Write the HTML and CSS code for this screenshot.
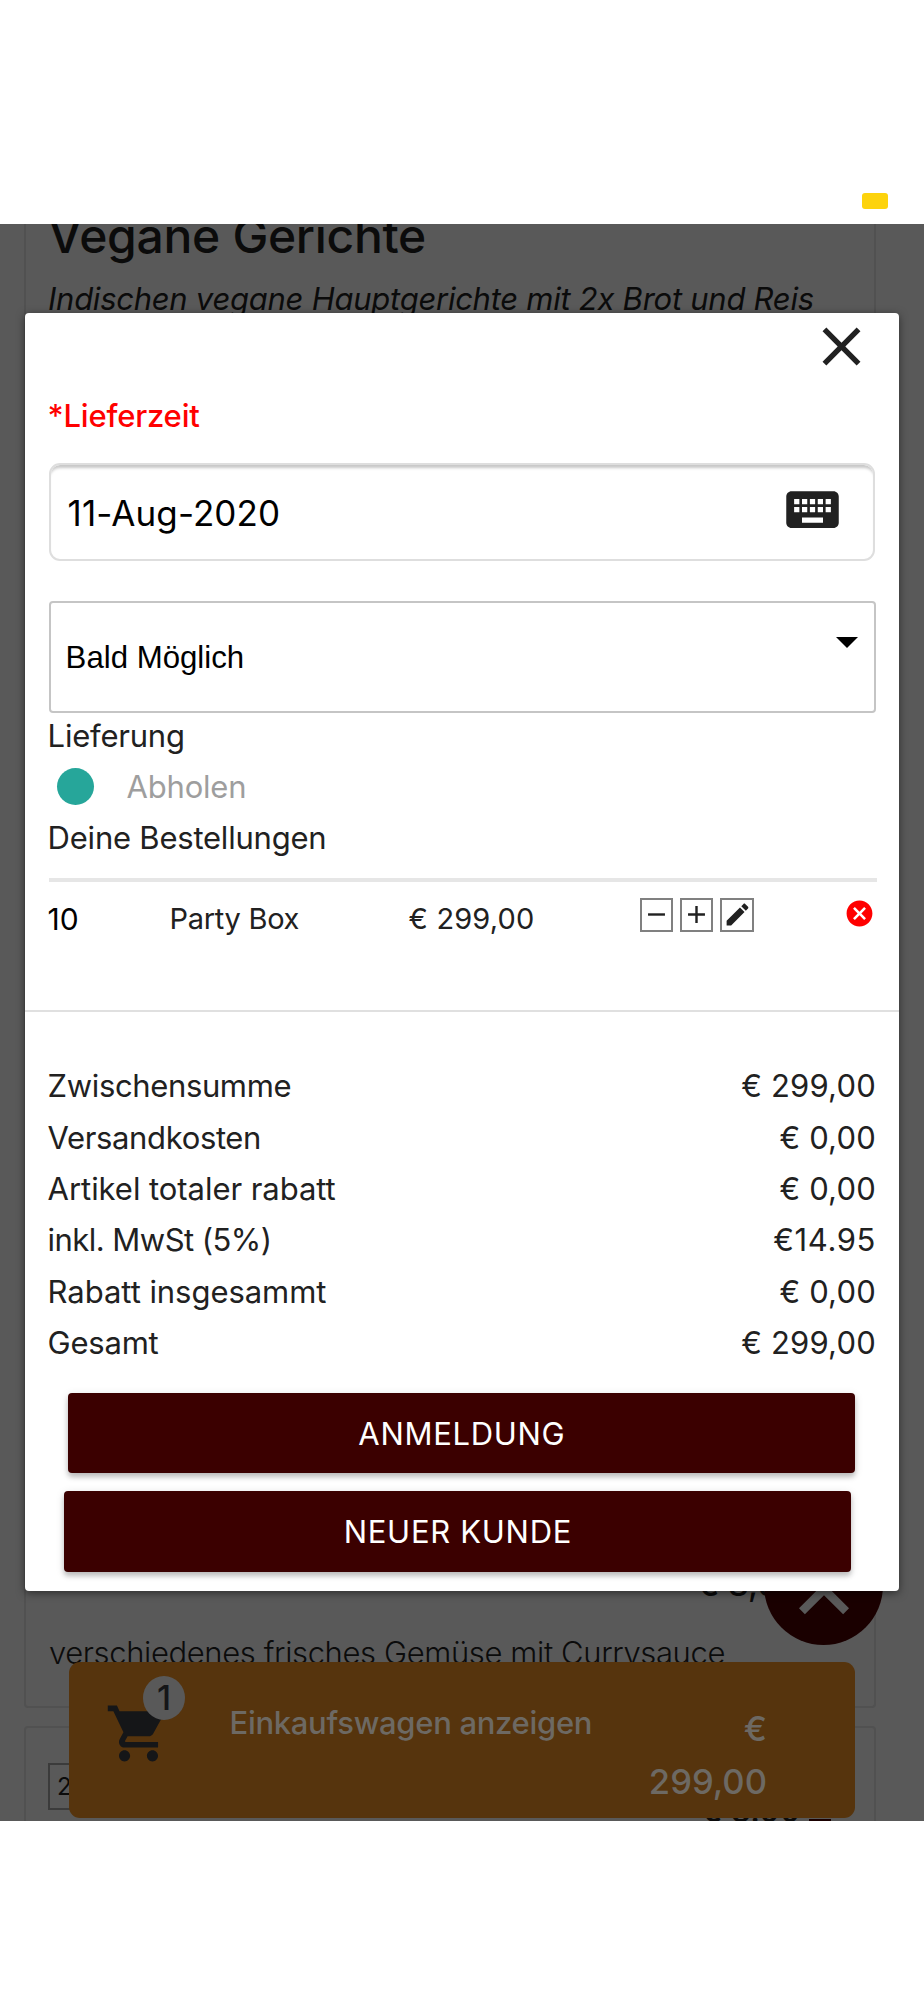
FILE: index.html
```html
<!DOCTYPE html>
<html lang="de">
<head>
<meta charset="utf-8">
<title>Warenkorb</title>
<link rel="stylesheet" href="styles.css">
</head>
<body>
<header class="topbar"><span class="marker"></span></header>
<main class="screen">
  <section class="card card-menu">
    <h1 class="title"><span>Vegane Gerichte</span></h1>
    <p class="subtitle"><span>Indischen vegane Hauptgerichte mit 2x Brot und Reis</span></p>
    <p class="price-back">€ 8,90</p>
    <p class="desc"><span>verschiedenes frisches Gemüse mit Currysauce</span></p>
  </section>
  <section class="card card-next">
    <span class="num">203</span>
    <span class="price-next">€ 8.90 <i class="pen"></i></span>
  </section>

  <div class="fab"><svg viewBox="0 0 24 24"><path d="M12 8l-6 6 1.41 1.41L12 10.83l4.59 4.58L18 14z"/></svg></div>

  <div class="cartbar">
    <div class="cart">
      <svg viewBox="0 0 24 24"><path d="M7 18c-1.1 0-1.99.9-1.99 2S5.9 22 7 22s2-.9 2-2-.9-2-2-2zM1 2v2h2l3.6 7.59-1.35 2.45c-.16.28-.25.61-.25.96 0 1.1.9 2 2 2h12v-2H7.42c-.14 0-.25-.11-.25-.25l.03-.12.9-1.63h7.45c.75 0 1.41-.41 1.75-1.03l3.58-6.49c.08-.14.12-.31.12-.48 0-.55-.45-1-1-1H5.21l-.94-2H1zm16 16c-1.1 0-1.99.9-1.99 2s.89 2 1.99 2 2-.9 2-2-.9-2-2-2z"/></svg>
      <span class="badge">1</span>
    </div>
    <span class="cart-label"><span>Einkaufswagen anzeigen</span></span>
    <span class="cart-sum">€ 299,00</span>
  </div>

  <div class="modal">
    <div class="close-row"><svg class="close" viewBox="0 0 24 24"><path d="M19 6.41L17.59 5 12 10.59 6.41 5 5 6.41 10.59 12 5 17.59 6.41 19 12 13.41 17.59 19 19 17.59 13.41 12z"/></svg></div>
    <div class="label"><span>*Lieferzeit</span></div>
    <div class="date"><span>11-Aug-2020</span>
      <svg viewBox="0 0 24 24"><path d="M20 5H4c-1.1 0-1.99.9-1.99 2L2 17c0 1.1.9 2 2 2h16c1.1 0 2-.9 2-2V7c0-1.1-.9-2-2-2zm-9 3h2v2h-2V8zm0 3h2v2h-2v-2zM8 8h2v2H8V8zm0 3h2v2H8v-2zm-1 2H5v-2h2v2zm0-3H5V8h2v2zm9 7H8v-2h8v2zm0-4h-2v-2h2v2zm0-3h-2V8h2v2zm3 3h-2v-2h2v2zm0-3h-2V8h2v2z"/></svg>
    </div>
    <div class="select"><span>Bald Möglich</span><i class="arrow"></i></div>
    <div class="row delivery"><span>Lieferung</span></div>
    <div class="row pickup"><i class="dot"></i><span>Abholen</span></div>
    <div class="row orders"><span>Deine Bestellungen</span></div>
    <div class="rule"></div>
    <div class="item">
      <span class="qty">10</span><span class="name">Party Box</span><span class="cost">€ 299,00</span>
      <div class="tools">
        <i class="tool"><svg viewBox="0 0 24 24"><path d="M19 13H5v-2h14v2z"/></svg></i>
        <i class="tool"><svg viewBox="0 0 24 24"><path d="M19 13h-6v6h-2v-6H5v-2h6V5h2v6h6v2z"/></svg></i>
        <i class="tool"><svg viewBox="0 0 24 24"><path d="M3 17.25V21h3.75L17.81 9.94l-3.75-3.75L3 17.25zM20.71 7.04c.39-.39.39-1.02 0-1.41l-2.34-2.34c-.39-.39-1.02-.39-1.41 0l-1.83 1.83 3.75 3.75 1.83-1.83z"/></svg></i>
      </div>
      <svg class="remove" viewBox="0 0 24 24"><path d="M12 2C6.47 2 2 6.47 2 12s4.47 10 10 10 10-4.47 10-10S17.53 2 12 2zm5 13.59L15.59 17 12 13.41 8.41 17 7 15.59 10.59 12 7 8.41 8.41 7 12 10.59 15.59 7 17 8.41 13.41 12 17 15.59z"/></svg>
    </div>
    <div class="totals">
      <div class="row subtotal"><span>Zwischensumme</span><span>€ 299,00</span></div>
      <div class="row shipping"><span>Versandkosten</span><span>€ 0,00</span></div>
      <div class="row discount"><span>Artikel totaler rabatt</span><span>€ 0,00</span></div>
      <div class="row tax"><span>inkl. MwSt (5%)</span><span>€14.95</span></div>
      <div class="row discount"><span>Rabatt insgesammt</span><span>€ 0,00</span></div>
      <div class="row total"><span>Gesamt</span><span>€ 299,00</span></div>
    </div>
    <div class="btn btn-login"><span>ANMELDUNG</span></div>
    <div class="btn btn-new"><span>NEUER KUNDE</span></div>
  </div>
</main>
</body>
</html>
```
FILE: styles.css
```css
* { box-sizing: border-box; }
body { margin: 0; background: #fff; font-family: Inter, "Liberation Sans", sans-serif; font-size: 31px; color: #212121; height: 2000px; overflow: hidden; }
h1, p { margin: 0; font-weight: 400; }
svg { display: block; flex: none; fill: currentColor; }
span { white-space: nowrap; }

.topbar { height: 224px; display: flex; justify-content: flex-end; align-items: flex-end; padding: 0 36px 15px 0; }
.marker { width: 26px; height: 16px; border-radius: 3px; background: #fdd30c; }

.screen { position: relative; height: 1597px; background: #595959; overflow: hidden; color: #0b0b0b; }
.card { width: 852px; margin-left: 24px; border: 2px solid #515151; border-radius: 4px; padding: 0 23px; }
.card-menu { height: 1484px; border-top: 0; border-radius: 0 0 4px 4px; display: flex; flex-direction: column; }
.title { font-size: 48px; font-weight: 500; line-height: 56px; height: 56px; margin: -16px 0 0 -1px; letter-spacing: -.3px; }
.subtitle { font-style: italic; line-height: 40px; margin: 15px 0 0 -1px; letter-spacing: -.26px; }
.price-back { margin: auto 0 0 648px; line-height: 40px; font-size: 33px; font-weight: 500; }
.desc { font-weight: 300; line-height: 40px; margin: 29px 0 33px; letter-spacing: -.38px; }
.card-next { margin-top: 18px; height: 150px; display: flex; justify-content: space-between; align-items: flex-start; padding: 35px 23px 0 22px; }
.num { border: 2px solid #3b3b3b; height: 47px; width: 80px; font-size: 24px; line-height: 44px; padding-left: 7px; }
.price-next { font-size: 32px; font-weight: 500; line-height: 40px; margin: 28px 20px 0 0; }
.pen { display: inline-block; width: 22px; height: 4px; background: #1a0000; vertical-align: -1px; }

.fab { position: absolute; left: 764px; top: 1302px; width: 119px; height: 119px; border-radius: 50%; background: #1a0000; color: #595959; }
.fab svg { width: 100px; height: 100px; margin: 24px 0 0 10px; }

.cartbar { position: absolute; left: 69px; top: 1438px; width: 786px; height: 156px; border-radius: 11px; background: #56340d; color: #6d6963; font-weight: 500; display: flex; }
.cart { position: relative; width: 160.5px; color: #151618; }
.cart svg { width: 67px; height: 67px; margin: 38px 0 0 36px; }
.badge { position: absolute; left: 74px; top: 14px; width: 42px; height: 44px; border-radius: 50%; background: #595959; font-size: 34px; line-height: 43px; text-align: center; }
.cart-label { line-height: 40px; margin-top: 41px; letter-spacing: -.3px; }
.cart-sum { margin: 39.5px 88px 0 auto; width: 125px; font-size: 34.6px; line-height: 53px; text-align: right; white-space: normal; }

.modal { position: absolute; left: 24.6px; top: 89px; width: 874.4px; height: 1278px; border-radius: 4px; background: #fff; box-shadow: 0 2px 8px rgba(0,0,0,.5); padding: 0 24px; color: #212121; display: flex; flex-direction: column; }
.modal > * { flex: none; }
.close-row { display: flex; justify-content: flex-end; height: 66px; }
.close { width: 65px; height: 65px; margin: 1px 1px 0 0; }
.label { color: #f00; font-weight: 500; line-height: 52px; margin: 11px 0 0 -1px; letter-spacing: -.2px; }
.date { height: 98px; margin: 21px 0 0; width: 826px; border: 2px solid #dedede; border-radius: 11px; box-shadow: inset 0 5px 3px -2px rgba(0,0,0,.22); padding: 0 28.6px 5px 17px; display: flex; align-items: center; justify-content: space-between; font-size: 35px; letter-spacing: .1px; color: #000; }
.date span { padding-top: 6px; }
.date svg { width: 63px; height: 63px; color: #212121; }
.select { margin-top: 40px; width: 827.4px; height: 112px; border: 2px solid #c5c5c5; border-radius: 4px; padding: 2px 16px 0 15px; display: flex; align-items: center; justify-content: space-between; font: 31.2px "Liberation Sans", sans-serif; color: #000; }
.arrow { border: 11px solid transparent; border-top-color: #000; border-bottom: 0; margin-bottom: 31px; }
.row { display: flex; justify-content: space-between; line-height: 51.4px; width: 828.4px; margin-left: -1px; letter-spacing: -.22px; }
.delivery { margin-top: -3px; height: 50.9px; }
.pickup { justify-content: flex-start; align-items: center; color: #9e9e9e; }
.dot { width: 37px; height: 37px; border-radius: 50%; background: #26a69a; margin: 0 33px 0 9px; }
.rule { width: 828px; height: 4px; background: #e6e6e6; margin-top: 14.5px; }
.item { height: 130px; margin: 0 -24px; padding: 0 24px; border-bottom: 2px solid #e0e0e0; display: grid; grid-template-columns: 122px 238px 231px 200px 1fr; font-size: 29px; line-height: 40px; padding-top: 17px; align-items: start; }
.qty { color: #000; font-size: 30px; margin-left: -1px; }
.name { margin-left: -1px; letter-spacing: -.3px; }
.cost { letter-spacing: .15px; }
.tools { display: flex; gap: 7px; margin-top: -1px; }
.tool { width: 33.4px; height: 33.4px; border: 2px solid #808080; display: grid; place-items: center; }
.tool svg { width: 29px; height: 29px; }
.remove { width: 31px; height: 31px; margin: -1px 0 0 4px; color: #f00; }
.totals { padding-top: 48px; }
.totals .row span + span { letter-spacing: .2px; }
.subtotal, .shipping { letter-spacing: -.36px; }
.discount { letter-spacing: -.05px; }
.tax { letter-spacing: -.54px; }
.totals .tax span + span { letter-spacing: .6px; }
.btn { width: 787px; height: 80.5px; border-radius: 4px; background: #3b0000; color: #fff; line-height: 81px; text-align: center; letter-spacing: .7px; box-shadow: 0 4px 5px rgba(0,0,0,.2), 0 2px 10px rgba(0,0,0,.12); }
.btn-login { margin: 24.2px 0 0 19.8px; }
.btn-new { margin: 18px 0 0 15.8px; }
```
